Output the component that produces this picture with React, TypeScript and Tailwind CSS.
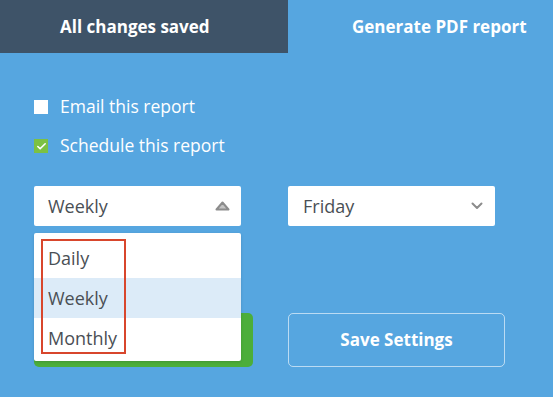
import { Check } from 'lucide-react'

function Checkbox({ checked, label }: { checked?: boolean; label: string }) {
  return (
    <label className="flex items-center h-[14px] text-[17.5px] text-white">
      <span
        className={`w-[14px] h-[14px] shrink-0 flex items-center justify-center ${
          checked ? 'bg-[#7cc143]' : 'bg-white'
        }`}
      >
        {checked && <Check size={11} strokeWidth={3.5} className="text-white" />}
      </span>
      <span className="ml-[12px] leading-none">{label}</span>
    </label>
  )
}

export default function App() {
  return (
    <div className="w-[553px] h-[397px] overflow-hidden bg-[#56a6e0] font-['Open_Sans',sans-serif]">
      <div className="flex h-[53px]">
        <div className="w-[288px] bg-[#3e5368] flex items-center pl-[60px] text-[17px] font-bold text-white">
          All changes saved
        </div>
        <div className="flex-1 flex items-center pl-[64px] text-[17px] font-bold text-white whitespace-nowrap">
          Generate PDF report
        </div>
      </div>

      <div className="px-[34px]">
        <div className="pt-[47px] flex flex-col gap-[25px]">
          <Checkbox label="Email this report" />
          <Checkbox checked label="Schedule this report" />
        </div>

        <div className="mt-[33px] flex gap-[47px]">
          <div className="relative">
            <div className="w-[207px] h-[40px] bg-white rounded-[2px] flex items-center justify-between pl-[14px] pr-[11px] text-[18px] text-[#4a4f55]">
              <span>Weekly</span>
              <svg width="15" height="10" viewBox="0 0 15 10">
                <polygon points="7.5,1.5 13.5,8.5 1.5,8.5" fill="#c4c4c4" stroke="#8c8c8c" strokeWidth="2" strokeLinejoin="round" />
              </svg>
            </div>
            <div className="absolute z-10 left-0 top-[47px] w-[207px] bg-white rounded-[2px] pt-[5px] pb-[3px] text-[18px] text-[#4a4f55] shadow-[0_1px_3px_rgba(0,0,0,0.15)]">
              <div className="h-[40px] flex items-center pl-[14px]">Daily</div>
              <div className="h-[40px] flex items-center pl-[14px] bg-[#dcebf8]">Weekly</div>
              <div className="h-[40px] flex items-center pl-[14px]">Monthly</div>
              <div className="absolute left-[7px] top-[6px] w-[85px] h-[115px] border-2 border-[#d8462c]" />
            </div>
          </div>
          <div className="w-[207px] h-[40px] bg-white rounded-[2px] flex items-center justify-between pl-[15px] pr-[12px] text-[18px] text-[#4a4f55]">
            <span>Friday</span>
            <svg width="12" height="8" viewBox="0 0 12 8">
              <polyline points="1.5,1.5 6,6 10.5,1.5" fill="none" stroke="#8c8c8c" strokeWidth="2" strokeLinecap="round" strokeLinejoin="round" />
            </svg>
          </div>
        </div>

        <div className="mt-[87px] flex gap-[35px]">
          <div className="w-[219px] h-[54px] rounded-[5px] bg-[#4cae3a]" />
          <button className="w-[217px] h-[54px] rounded-[5px] border-[1.5px] border-white/60 text-white font-bold text-[17px]">
            Save Settings
          </button>
        </div>
      </div>
    </div>
  )
}
